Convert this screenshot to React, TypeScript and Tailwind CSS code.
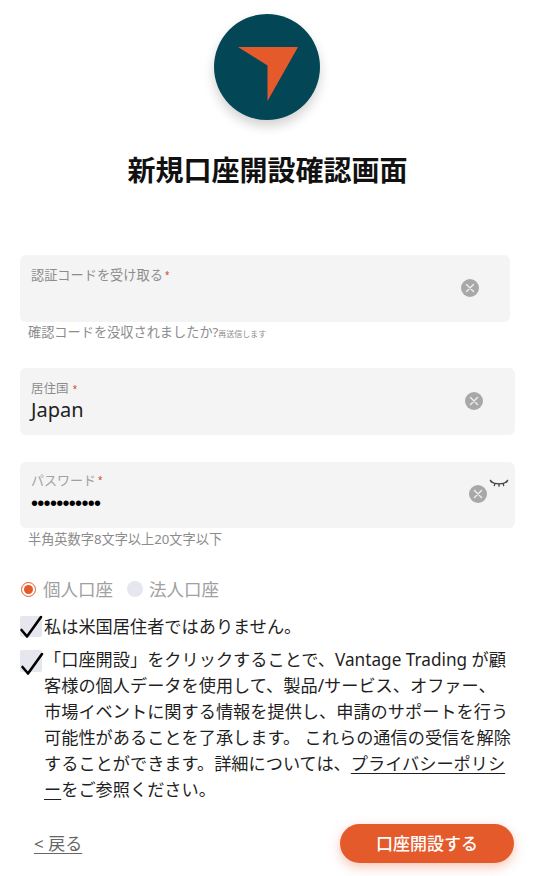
const ClearIcon = ({ className }: { className: string }) => (
  <svg viewBox="0 0 18 18" className={`absolute w-[18px] h-[18px] ${className}`}>
    <circle cx="9" cy="9" r="9" fill="#a8a8a8" />
    <path d="M5.500 5.500l7 7M12.500 5.500l-7 7" stroke="#f0f0f0" strokeWidth="1.400" strokeLinecap="round" />
  </svg>
);

const ClosedEye = () => (
  <svg viewBox="0 0 20 12" fill="none" stroke="#444" strokeWidth="1.300" className="absolute right-[6px] top-[17px] w-[20px] h-[12px]">
    <path d="M1.500 2.500c5 3.200 12 3.200 17 0" />
    <path d="M1 1l2.500 2.500M6 4.200l-.8 3M10 4.800v3M14 4.200l.8 3M19 1l-2.500 2.500" />
  </svg>
);

const Check = ({ className }: { className: string }) => (
  <svg viewBox="0 0 24 24" fill="none" stroke="#000" strokeWidth="2.600" strokeLinecap="round" strokeLinejoin="round" className={`absolute w-[24px] h-[24px] ${className}`}>
    <path d="M2.500 15l5.500 6.500L22 2" />
  </svg>
);

export default function App() {
  return (
    <div className="w-[535px] h-[876px] overflow-hidden bg-white font-['Noto_Sans','Noto_Sans_CJK_JP',sans-serif] text-[#1f1f1f]">
      <div className="flex justify-center pt-[14px] pr-[1px]">
        <div className="w-[106px] h-[106px] rounded-full bg-[#034756] shadow-[0_6px_12px_rgba(0,0,0,0.18)] flex items-center justify-center">
          <svg viewBox="0 0 60 54" className="w-[60px] h-[54px] mt-[13px] ml-[2px]">
            <path d="M0 0H60L29.500 54V18.500Z" fill="#e55a2b" />
          </svg>
        </div>
      </div>

      <h1 className="mt-[29px] text-center text-[28px] leading-[40px] font-bold text-[#111] font-['Noto_Sans_CJK_JP',sans-serif]">
        新規口座開設確認画面
      </h1>

      <div className="relative mt-[66px] ml-[20px] w-[490px] h-[67px] rounded-[6px] bg-[#f4f4f4] px-[11px] pt-[10px]">
        <p className="text-[13.200px] leading-[20px] text-[#8c8c8c]">
          認証コードを受け取る<span className="text-[#c8401f] text-[8px] ml-[2px] align-top">*</span>
        </p>
        <ClearIcon className="right-[31px] top-[24px]" />
      </div>
      <p className="ml-[28px] text-[13.200px] leading-[20px] text-[#8c8c8c]">
        確認コードを没収されましたか?<span className="text-[8px]">再送信します</span>
      </p>

      <div className="relative mt-[24px] ml-[20px] w-[495px] h-[67px] rounded-[6px] bg-[#f4f4f4] px-[11px] pt-[13px]">
        <p className="text-[12.500px] leading-[16px] text-[#8c8c8c]">
          居住国 <span className="text-[#c8401f] text-[8px] ml-[1px] align-top">*</span>
        </p>
        <p className="text-[20px] leading-[26px] text-[#222]">Japan</p>
        <ClearIcon className="right-[32px] top-[24px]" />
      </div>

      <div className="relative mt-[27px] ml-[20px] w-[495px] h-[66px] rounded-[6px] bg-[#f4f4f4] px-[11px] pt-[8px]">
        <p className="text-[13px] leading-[20px] text-[#a0a0a0]">
          パスワード<span className="text-[#c8401f] text-[8px] ml-[2px] align-top">*</span>
        </p>
        <p className="text-[20px] leading-[26px] text-[#000] font-['Liberation_Sans',sans-serif] tracking-[-0.700px]">•••••••••••</p>
        <ClearIcon className="right-[28px] top-[23px]" />
        <ClosedEye />
      </div>
      <p className="ml-[28px] mt-[1px] text-[13.200px] leading-[20px] text-[#8c8c8c]">半角英数字8文字以上20文字以下</p>

      <div className="flex items-center mt-[28px] ml-[21px] h-[24px] text-[17.500px] text-[#a0a0a0]">
        <span className="w-[15px] h-[15px] rounded-full border border-[#e55a2b] flex items-center justify-center">
          <span className="w-[9px] h-[9px] rounded-full bg-[#e55a2b]" />
        </span>
        <span className="ml-[7px]">個人口座</span>
        <span className="ml-[14px] w-[16px] h-[16px] rounded-full bg-[#e6e7ee]" />
        <span className="ml-[6px]">法人口座</span>
      </div>

      <div className="relative flex mt-[13px] ml-[20px] text-[17.200px] leading-[26px]">
        <span className="w-[22px] h-[21px] mt-[2px] rounded-[2px] bg-[#e6e7ee] shrink-0" />
        <Check className="left-[-1px] top-[1px]" />
        <p className="ml-[2px]">私は米国居住者ではありません。</p>
      </div>

      <div className="relative flex mt-[7px] ml-[20px] w-[495px] text-[17.200px] leading-[26px]">
        <span className="w-[22px] h-[22px] mt-[3px] rounded-[2px] bg-[#e6e7ee] shrink-0" />
        <Check className="left-0 top-[5px]" />
        <p className="ml-[2px] whitespace-nowrap">
          「口座開設」をクリックすることで、Vantage Trading が顧<br />
          客様の個人データを使用して、製品/サービス、オファー、<br />
          市場イベントに関する情報を提供し、申請のサポートを行う<br />
          可能性があることを了承します。 これらの通信の受信を解除<br />
          することができます。詳細については、<span className="underline underline-offset-[3px]">プライバシーポリシ<br />ー</span>をご参照ください。
        </p>
      </div>

      <div className="flex items-center justify-between mt-[21px] ml-[34px] mr-[21px]">
        <a className="text-[17px] leading-[24px] text-[#666] underline underline-offset-[3px]">&lt; 戻る</a>
        <button className="w-[174px] h-[39px] rounded-full bg-[#e55a2b] text-white text-[17px] font-medium shadow-[0_4px_12px_rgba(229,90,43,0.35)]">
          口座開設する
        </button>
      </div>
    </div>
  );
}
